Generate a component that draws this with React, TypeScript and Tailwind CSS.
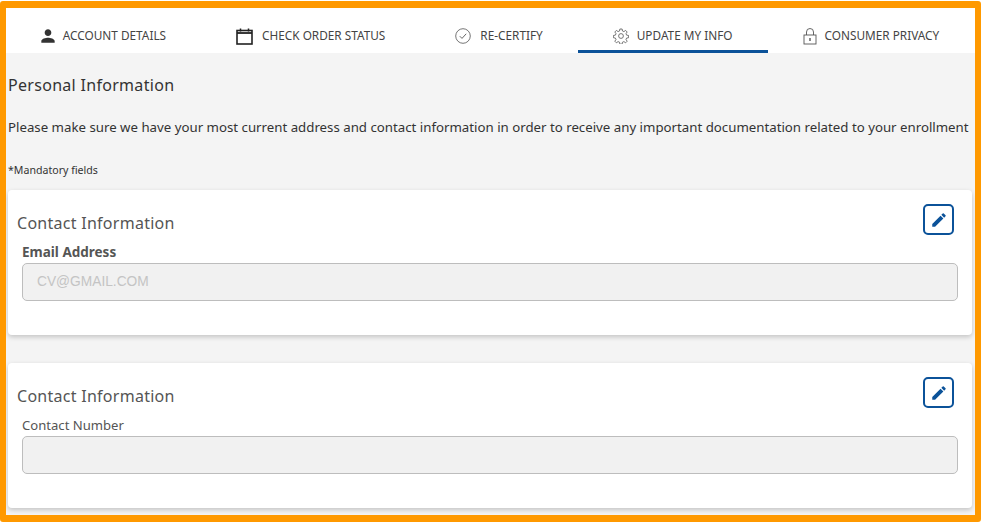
import React from "react";

const PersonIcon = () => (
  <svg width="20" height="20" viewBox="0 0 24 24" fill="#333333" className="shrink-0">
    <path d="M12 12c2.21 0 4-1.79 4-4s-1.79-4-4-4-4 1.79-4 4 1.79 4 4 4zm0 2c-2.67 0-8 1.34-8 4v2h16v-2c0-2.66-5.33-4-8-4z" />
  </svg>
);

const CalendarIcon = () => (
  <svg width="17" height="17" viewBox="0 0 17 17" fill="none" className="shrink-0">
    <rect x="1" y="2.5" width="15" height="13.5" stroke="#222222" strokeWidth="1.6" />
    <path d="M1 5h15" stroke="#222222" strokeWidth="1.8" />
    <path d="M4.5 0.5v3M12.5 0.5v3" stroke="#222222" strokeWidth="1.5" />
  </svg>
);

const CheckIcon = () => (
  <svg width="16" height="16" viewBox="0 0 16 16" fill="none" className="shrink-0">
    <circle cx="8" cy="8" r="7.3" stroke="#666666" strokeWidth="0.9" />
    <path d="M4.8 8.2l2.2 2.2 4.2-4.6" stroke="#555555" strokeWidth="0.9" />
  </svg>
);

const GearIcon = () => (
  <svg width="16" height="16" viewBox="0 0 24 24" fill="none" stroke="#555555" strokeWidth="1.2" className="shrink-0">
    <circle cx="12" cy="12" r="3.6" />
    <path d="M10.3 1.5h3.4l.5 3 2.2.9 2.5-1.8 2.4 2.4-1.8 2.5.9 2.2 3 .5v3.4l-3 .5-.9 2.2 1.8 2.5-2.4 2.4-2.5-1.8-2.2.9-.5 3h-3.4l-.5-3-2.2-.9-2.5 1.8-2.4-2.4 1.8-2.5-.9-2.2-3-.5v-3.4l3-.5.9-2.2-1.8-2.5 2.4-2.4 2.5 1.8 2.2-.9z" />
  </svg>
);

const LockIcon = () => (
  <svg width="14" height="17" viewBox="0 0 14 17" fill="none" className="shrink-0">
    <rect x="1" y="7" width="12" height="9" stroke="#555555" strokeWidth="0.9" />
    <path d="M3.5 7V4a3.5 3.5 0 0 1 7 0v3" stroke="#555555" strokeWidth="0.9" />
    <path d="M7 10v3" stroke="#555555" strokeWidth="1.4" />
  </svg>
);

const PencilIcon = () => (
  <svg width="18" height="18" viewBox="0 0 24 24" fill="#0b5299">
    <path d="M3 17.25V21h3.75L17.81 9.94l-3.75-3.75L3 17.25zM20.71 7.04a1 1 0 0 0 0-1.41l-2.34-2.34a1 1 0 0 0-1.41 0l-1.83 1.83 3.75 3.75 1.83-1.83z" />
  </svg>
);

const tabs = [
  { label: "ACCOUNT DETAILS", icon: <PersonIcon />, gap: "gap-[5px]", pad: "pl-[29px] pr-[35px]" },
  { label: "CHECK ORDER STATUS", icon: <CalendarIcon />, gap: "gap-[9px]", pad: "px-[35px]" },
  { label: "RE-CERTIFY", icon: <CheckIcon />, gap: "gap-[9px]", pad: "px-[35px]" },
  { label: "UPDATE MY INFO", icon: <GearIcon />, gap: "gap-[8px]", pad: "px-[35px]", active: true },
  { label: "CONSUMER PRIVACY", icon: <LockIcon />, gap: "gap-[8px]", pad: "px-[35px]" },
];

function ContactCard({ label, value, bold }: { label: string; value?: string; bold?: boolean }) {
  return (
    <div className="h-[145px] bg-white rounded-[4px] shadow-[0_2px_5px_rgba(0,0,0,0.2)] pl-[9px] pr-[14px] pt-[14px]">
      <div className="flex justify-between items-start h-[31px] pr-[4px]">
        <h3 className="text-[16px] leading-[38px] text-[#555555] tracking-[0.27px]">Contact Information</h3>
        <button className="w-[31px] h-[31px] flex items-center justify-center border-2 border-[#0b5299] rounded-[5px] bg-white">
          <PencilIcon />
        </button>
      </div>
      <div className="pl-[5px]">
        <label className={`block mt-[8px] h-[18px] leading-[18px] text-[#555555] ${bold ? "font-bold text-[13.5px]" : "text-[13.1px]"}`}>
          {label}
        </label>
        <div className="mt-[2px] h-[38px] bg-[#f1f1f1] border border-[#bdbdbd] rounded-[5px] flex items-center pl-[14px] text-[13.75px] text-[#c4c4c4] font-['Liberation_Sans',sans-serif]">
          {value}
        </div>
      </div>
    </div>
  );
}

export default function App() {
  return (
    <div className="w-[984px] h-[522px] bg-white overflow-hidden font-['Noto_Sans',sans-serif]">
      <div className="w-[981px] h-[521px] mt-px border-x-[6px] border-y-[7px] border-[#ff9900] rounded-[3px] flex flex-col">
        <nav className="h-[45px] bg-white flex justify-center shrink-0 pl-[2px]">
          {tabs.map((t) => (
            <div
              key={t.label}
              className={`flex items-center pt-[14px] text-[11.8px] text-[#444444] border-b-[3px] ${t.pad} ${t.gap} ${t.active ? "border-[#0b5299]" : "border-transparent"}`}
            >
              {t.icon}
              <span className="whitespace-nowrap">{t.label}</span>
            </div>
          ))}
        </nav>
        <main className="flex-1 bg-[#f4f4f4] pl-[2px] pr-[3px] overflow-hidden">
          <h1 className="mt-[21px] text-[16px] leading-[22px] text-[#333333] tracking-[0.3px]">Personal Information</h1>
          <p className="mt-[21px] text-[13.26px] leading-[20px] text-[#333333] whitespace-nowrap">
            Please make sure we have your most current address and contact information in order to receive any important documentation related to your enrollment
          </p>
          <p className="mt-[26px] text-[10.6px] leading-[14px] text-[#333333]">*Mandatory fields</p>
          <div className="mt-[13px] flex flex-col gap-[28px]">
            <ContactCard label="Email Address" value="CV@GMAIL.COM" bold />
            <ContactCard label="Contact Number" />
          </div>
        </main>
      </div>
    </div>
  );
}
